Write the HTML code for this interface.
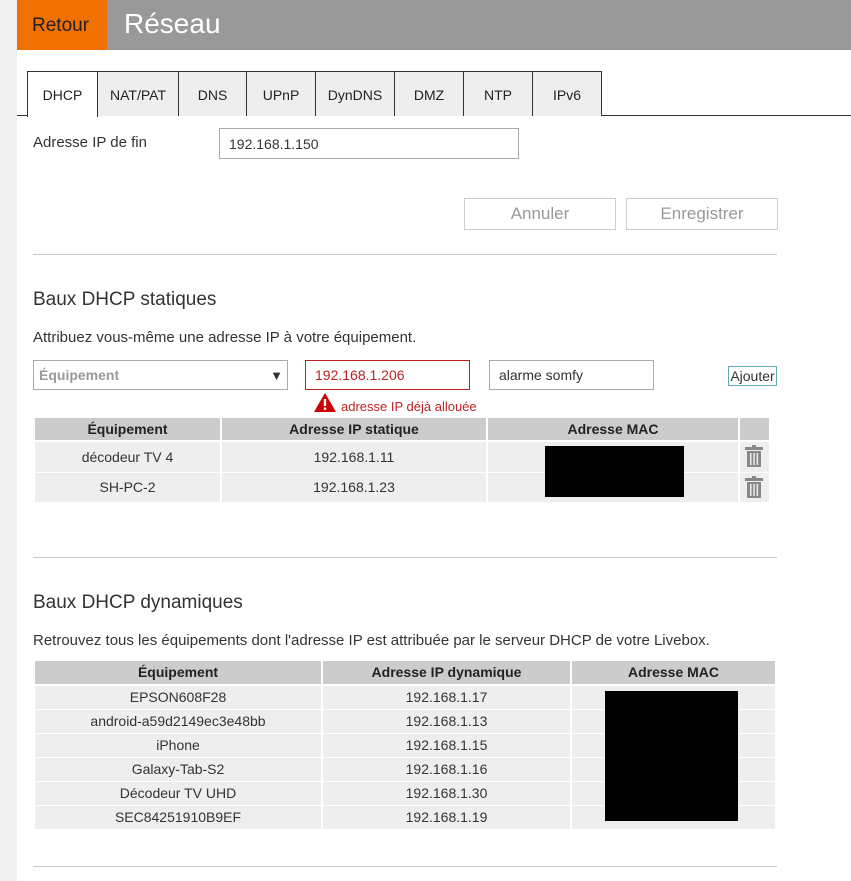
<!DOCTYPE html>
<html><head><meta charset="utf-8"><style>
*{margin:0;padding:0;box-sizing:border-box}
body{width:851px;height:881px;background:#fff;font-family:"Liberation Sans",Arial,sans-serif;color:#333;position:relative;overflow:hidden;font-size:14px}
.a{position:absolute;white-space:nowrap}
.tab{position:absolute;top:71px;height:45px;border:1px solid #333;border-bottom:none;background:#eee;font-size:14px;text-align:center;line-height:46px;color:#222}
.inp{position:absolute;border:1px solid #aaa;background:#fff;padding-left:9px;font-size:14px;color:#333}
.btn{position:absolute;border:1px solid #ccc;background:#fff;color:#999;font-size:17px;text-align:center;line-height:30px}
.hr{position:absolute;left:33px;width:744px;height:1px;background:#ccc}
.c{position:absolute;text-align:center;font-size:14px;color:#333}
.h{background:#ccc;font-weight:bold;color:#222}
.r{background:#eee}
</style></head><body>
<div class="a" style="left:0;top:0;width:17px;height:881px;background:#efefef"></div>
<div class="a" style="left:17px;top:0;width:834px;height:50px;background:#999"></div>
<div class="a" style="left:17px;top:0;width:90px;height:50px;background:#f07000;color:#222;font-size:19px;line-height:52px;padding-left:15px">Retour</div>
<div class="a" style="left:124px;top:8px;color:#fff;font-size:28px">Réseau</div>

<div class="a" style="left:17px;top:115px;width:834px;height:1px;background:#333"></div>
<div class="tab" style="left:27px;width:71px;background:#fff;height:46px">DHCP</div>
<div class="tab" style="left:97px;width:82px">NAT/PAT</div>
<div class="tab" style="left:178px;width:69px">DNS</div>
<div class="tab" style="left:246px;width:70px">UPnP</div>
<div class="tab" style="left:315px;width:80px">DynDNS</div>
<div class="tab" style="left:394px;width:70px">DMZ</div>
<div class="tab" style="left:463px;width:70px">NTP</div>
<div class="tab" style="left:532px;width:70px">IPv6</div>

<div class="a" style="left:33px;top:134px;font-size:15px">Adresse IP de fin</div>
<div class="inp" style="left:219px;top:128px;width:300px;height:31px;line-height:30px">192.168.1.150</div>
<div class="btn" style="left:464px;top:198px;width:152px;height:32px">Annuler</div>
<div class="btn" style="left:626px;top:198px;width:152px;height:32px">Enregistrer</div>
<div class="hr" style="top:254px"></div>

<div class="a" style="left:33px;top:289px;font-size:19px;color:#333">Baux DHCP statiques</div>
<div class="a" style="left:33px;top:329px;font-size:15px">Attribuez vous-même une adresse IP à votre équipement.</div>
<div class="inp" style="left:33px;top:360px;width:255px;height:30px;line-height:29px;font-weight:bold;color:#999;padding-left:5px">Équipement<span style="position:absolute;right:4px;top:0;color:#333;font-size:13px">▼</span></div>
<div class="inp" style="left:305px;top:360px;width:165px;height:30px;line-height:29px;border-color:#b22;color:#b22">192.168.1.206</div>
<div class="inp" style="left:489px;top:360px;width:165px;height:30px;line-height:29px">alarme somfy</div>
<div class="a" style="left:728px;top:366px;width:49px;height:20px;border:1px solid #6ab;font-size:14px;line-height:18px;text-align:center;color:#333">Ajouter</div>
<svg class="a" style="left:313px;top:392px" width="24" height="21" viewBox="0 0 24 21"><path d="M12 1 L23 20 L1 20 Z" fill="#c00"/><rect x="10.8" y="7" width="2.4" height="7" fill="#fff"/><rect x="10.8" y="15.5" width="2.4" height="2.4" fill="#fff"/></svg>
<div class="a" style="left:341px;top:399px;font-size:13px;color:#b22">adresse IP déjà allouée</div>

<div class="c h" style="left:35px;top:418px;width:185px;height:22px;line-height:22px">Équipement</div>
<div class="c h" style="left:222px;top:418px;width:264px;height:22px;line-height:22px">Adresse IP statique</div>
<div class="c h" style="left:488px;top:418px;width:250px;height:22px;line-height:22px">Adresse MAC</div>
<div class="c h" style="left:740px;top:418px;width:29px;height:22px"></div>
<div class="c r" style="left:35px;top:442px;width:185px;height:30px;line-height:30px">décodeur TV 4</div>
<div class="c r" style="left:222px;top:442px;width:264px;height:30px;line-height:30px">192.168.1.11</div>
<div class="c r" style="left:488px;top:442px;width:250px;height:30px"></div>
<div class="c r" style="left:740px;top:442px;width:29px;height:30px"></div>
<div class="c r" style="left:35px;top:473px;width:185px;height:29px;line-height:29px">SH-PC-2</div>
<div class="c r" style="left:222px;top:473px;width:264px;height:29px;line-height:29px">192.168.1.23</div>
<div class="c r" style="left:488px;top:473px;width:250px;height:29px"></div>
<div class="c r" style="left:740px;top:473px;width:29px;height:29px"></div>
<div class="a" style="left:545px;top:446px;width:139px;height:51px;background:#000"></div>
<svg class="a" style="left:745px;top:445px" width="18" height="22" viewBox="0 0 18 22"><rect x="7" y="0" width="4" height="2" fill="#888"/><rect x="0" y="2" width="18" height="3" fill="#888"/><rect x="2" y="6" width="14" height="16" fill="#888"/><rect x="5" y="8" width="1.5" height="12" fill="#eee"/><rect x="8.3" y="8" width="1.5" height="12" fill="#eee"/><rect x="11.6" y="8" width="1.5" height="12" fill="#eee"/></svg>
<svg class="a" style="left:745px;top:476px" width="18" height="22" viewBox="0 0 18 22"><rect x="7" y="0" width="4" height="2" fill="#888"/><rect x="0" y="2" width="18" height="3" fill="#888"/><rect x="2" y="6" width="14" height="16" fill="#888"/><rect x="5" y="8" width="1.5" height="12" fill="#eee"/><rect x="8.3" y="8" width="1.5" height="12" fill="#eee"/><rect x="11.6" y="8" width="1.5" height="12" fill="#eee"/></svg>

<div class="hr" style="top:557px"></div>
<div class="a" style="left:33px;top:592px;font-size:19px">Baux DHCP dynamiques</div>
<div class="a" style="left:33px;top:632px;font-size:15px">Retrouvez tous les équipements dont l'adresse IP est attribuée par le serveur DHCP de votre Livebox.</div>

<div class="c h" style="left:35px;top:661px;width:286px;height:23px;line-height:23px">Équipement</div>
<div class="c h" style="left:323px;top:661px;width:247px;height:23px;line-height:23px">Adresse IP dynamique</div>
<div class="c h" style="left:572px;top:661px;width:203px;height:23px;line-height:23px">Adresse MAC</div>

<div class="c r" style="left:35px;top:686px;width:286px;height:23px;line-height:23px">EPSON608F28</div>
<div class="c r" style="left:323px;top:686px;width:247px;height:23px;line-height:23px">192.168.1.17</div>
<div class="c r" style="left:572px;top:686px;width:203px;height:23px"></div>
<div class="c r" style="left:35px;top:710px;width:286px;height:23px;line-height:23px">android-a59d2149ec3e48bb</div>
<div class="c r" style="left:323px;top:710px;width:247px;height:23px;line-height:23px">192.168.1.13</div>
<div class="c r" style="left:572px;top:710px;width:203px;height:23px"></div>
<div class="c r" style="left:35px;top:734px;width:286px;height:23px;line-height:23px">iPhone</div>
<div class="c r" style="left:323px;top:734px;width:247px;height:23px;line-height:23px">192.168.1.15</div>
<div class="c r" style="left:572px;top:734px;width:203px;height:23px"></div>
<div class="c r" style="left:35px;top:758px;width:286px;height:23px;line-height:23px">Galaxy-Tab-S2</div>
<div class="c r" style="left:323px;top:758px;width:247px;height:23px;line-height:23px">192.168.1.16</div>
<div class="c r" style="left:572px;top:758px;width:203px;height:23px"></div>
<div class="c r" style="left:35px;top:782px;width:286px;height:23px;line-height:23px">Décodeur TV UHD</div>
<div class="c r" style="left:323px;top:782px;width:247px;height:23px;line-height:23px">192.168.1.30</div>
<div class="c r" style="left:572px;top:782px;width:203px;height:23px"></div>
<div class="c r" style="left:35px;top:806px;width:286px;height:23px;line-height:23px">SEC84251910B9EF</div>
<div class="c r" style="left:323px;top:806px;width:247px;height:23px;line-height:23px">192.168.1.19</div>
<div class="c r" style="left:572px;top:806px;width:203px;height:23px"></div>
<div class="a" style="left:605px;top:691px;width:133px;height:130px;background:#000"></div>

<div class="hr" style="top:866px"></div>
</body></html>
